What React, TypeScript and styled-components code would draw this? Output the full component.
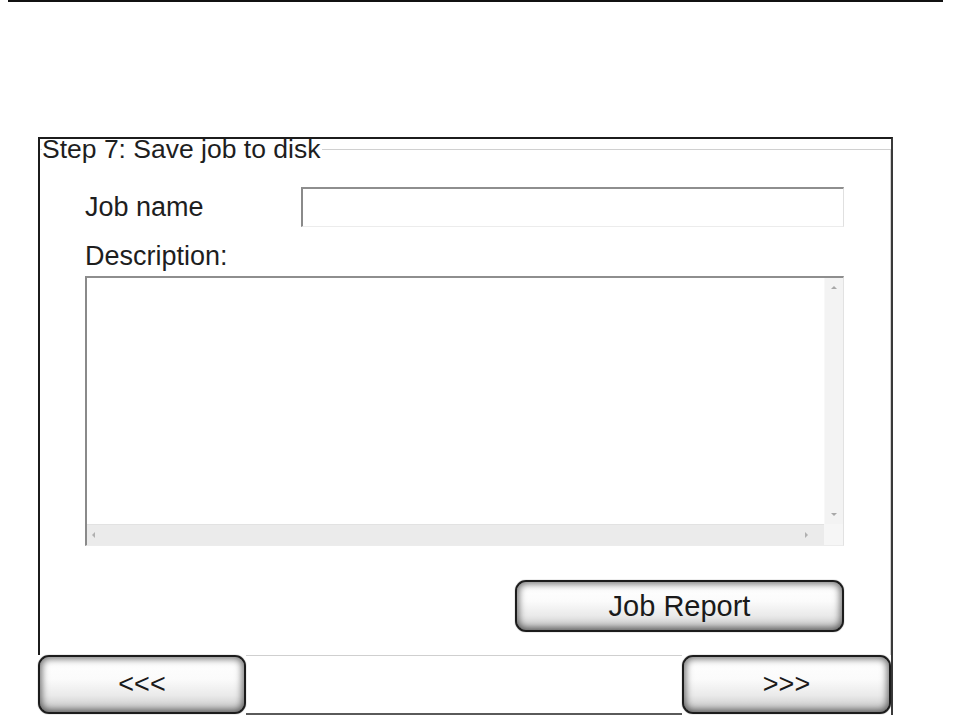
import React from "react";
import styled, { createGlobalStyle } from "styled-components";

const Global = createGlobalStyle`
  html, body { margin: 0; padding: 0; background: #ffffff; }
  body { font-family: "Liberation Sans", Arial, sans-serif; color: #1a1a1a; }
`;

const Page = styled.div`
  width: 955px;
  height: 715px;
  position: relative;
  overflow: hidden;
  display: flex;
  flex-direction: column;
`;

const TopRule = styled.div`
  height: 2px;
  margin: 0 12px 0 8px;
  background: #111;
`;

const Frame = styled.div`
  margin: 135px 0 0 38px;
  width: 855px;
  height: 518px;
  box-sizing: border-box;
  border-top: 2px solid #1c1c1c;
  border-left: 2px solid #1c1c1c;
  border-right: 2px solid #3a3a3a;
  display: flex;
`;

const Group = styled.fieldset`
  margin: 0;
  padding: 0 46px 0 44px;
  flex: 1;
  border: 1px solid #d0d0d0;
  border-left-color: transparent;
  border-bottom: none;
  display: flex;
  flex-direction: column;
  min-width: 0;
`;

const Legend = styled.legend`
  font-size: 26.5px;
  line-height: 20px;
  padding: 0 2px 0 0;
  margin-left: -43px;
  color: #1e1e1e;
`;

const FieldRow = styled.div`
  display: flex;
  align-items: center;
  justify-content: space-between;
  margin-top: 28px;
`;

const Label = styled.label`
  font-size: 27px;
  line-height: 30px;
  color: #1e1e1e;
`;

const DescLabel = styled(Label)`
  margin-top: 14px;
  display: block;
`;

const TextInput = styled.input`
  width: 543px;
  height: 40px;
  box-sizing: border-box;
  border-top: 2px solid #8e8e8e;
  border-left: 2px solid #8a8a8a;
  border-right: 1px solid #e0e0e0;
  border-bottom: 1px solid #ececec;
  background: #fff;
  outline: none;
  font-family: inherit;
  font-size: 18px;
  padding: 0 6px;
`;

const TextBox = styled.div`
  margin-top: 5px;
  height: 270px;
  box-sizing: border-box;
  border-top: 2px solid #8e8e8e;
  border-left: 2px solid #8a8a8a;
  border-right: 1px solid #e2e2e2;
  border-bottom: 1px solid #ececec;
  display: grid;
  grid-template-columns: 1fr 19px;
  grid-template-rows: 1fr 21px;
`;

const Area = styled.textarea`
  border: none;
  outline: none;
  resize: none;
  overflow: hidden;
  background: #fff;
  font-family: inherit;
  font-size: 16px;
  padding: 4px;
`;

const VScroll = styled.div`
  background: #f3f3f3;
  border-left: 1px solid #f8f8f8;
  display: flex;
  flex-direction: column;
  justify-content: space-between;
  align-items: center;
  padding: 8px 0 8px;
`;

const HScroll = styled.div`
  background: #ebebeb;
  border-top: 1px solid #e2e2e2;
  display: flex;
  justify-content: space-between;
  align-items: center;
  padding: 0 16px 0 5px;
`;

const Corner = styled.div`
  background: #f6f6f6;
`;

const Arrow = styled.span<{ dir: "up" | "down" | "left" | "right" }>`
  width: 0;
  height: 0;
  border-style: solid;
  ${({ dir }) =>
    dir === "up"
      ? "border-width: 0 3px 3px 3px; border-color: transparent transparent #a8a8a8 transparent;"
      : dir === "down"
      ? "border-width: 3px 3px 0 3px; border-color: #a8a8a8 transparent transparent transparent;"
      : dir === "left"
      ? "border-width: 3px 3px 3px 0; border-color: transparent #b0b0b0 transparent transparent;"
      : "border-width: 3px 0 3px 3px; border-color: transparent transparent transparent #b0b0b0;"}
`;

const ButtonRow = styled.div`
  display: flex;
  justify-content: flex-end;
  margin-top: 34px;
`;

const GlossButton = styled.button<{ w: number; h: number; fs: number }>`
  width: ${({ w }) => w}px;
  height: ${({ h }) => h}px;
  box-sizing: border-box;
  border: 2px solid #1c1c1c;
  border-radius: 11px;
  background: linear-gradient(
    to bottom,
    #ffffff 0%,
    #fbfbfb 40%,
    #eaeaea 70%,
    #c2c2c2 100%
  );
  box-shadow: inset 0 0 7px 2px rgba(0, 0, 0, 0.55), 0 0 1px rgba(0, 0, 0, 0.7);
  font-family: "Liberation Sans", Arial, sans-serif;
  font-size: ${({ fs }) => fs}px;
  color: #1a1a1a;
  display: flex;
  align-items: center;
  justify-content: center;
  padding: 0;
  flex-shrink: 0;
`;

const NavBar = styled.div`
  margin-left: 38px;
  width: 855px;
  height: 60px;
  box-sizing: border-box;
  border-right: 2px solid #3a3a3a;
  display: flex;
  align-items: stretch;
`;

const NavGap = styled.div`
  flex: 1;
  border-top: 1px solid #cfcfcf;
  border-bottom: 2px solid #5a5a5a;
`;

export default function App() {
  return (
    <Page>
      <Global />
      <TopRule />
      <Frame>
        <Group>
          <Legend>Step 7: Save job to disk</Legend>
          <FieldRow>
            <Label htmlFor="jobname">Job name</Label>
            <TextInput id="jobname" type="text" />
          </FieldRow>
          <DescLabel htmlFor="desc">Description:</DescLabel>
          <TextBox>
            <Area id="desc" />
            <VScroll>
              <Arrow dir="up" />
              <Arrow dir="down" />
            </VScroll>
            <HScroll>
              <Arrow dir="left" />
              <Arrow dir="right" />
            </HScroll>
            <Corner />
          </TextBox>
          <ButtonRow>
            <GlossButton w={329} h={52} fs={29}>Job Report</GlossButton>
          </ButtonRow>
        </Group>
      </Frame>
      <NavBar>
        <GlossButton w={208} h={59} fs={27}>&lt;&lt;&lt;</GlossButton>
        <NavGap />
        <GlossButton w={209} h={59} fs={27}>&gt;&gt;&gt;</GlossButton>
      </NavBar>
    </Page>
  );
}
